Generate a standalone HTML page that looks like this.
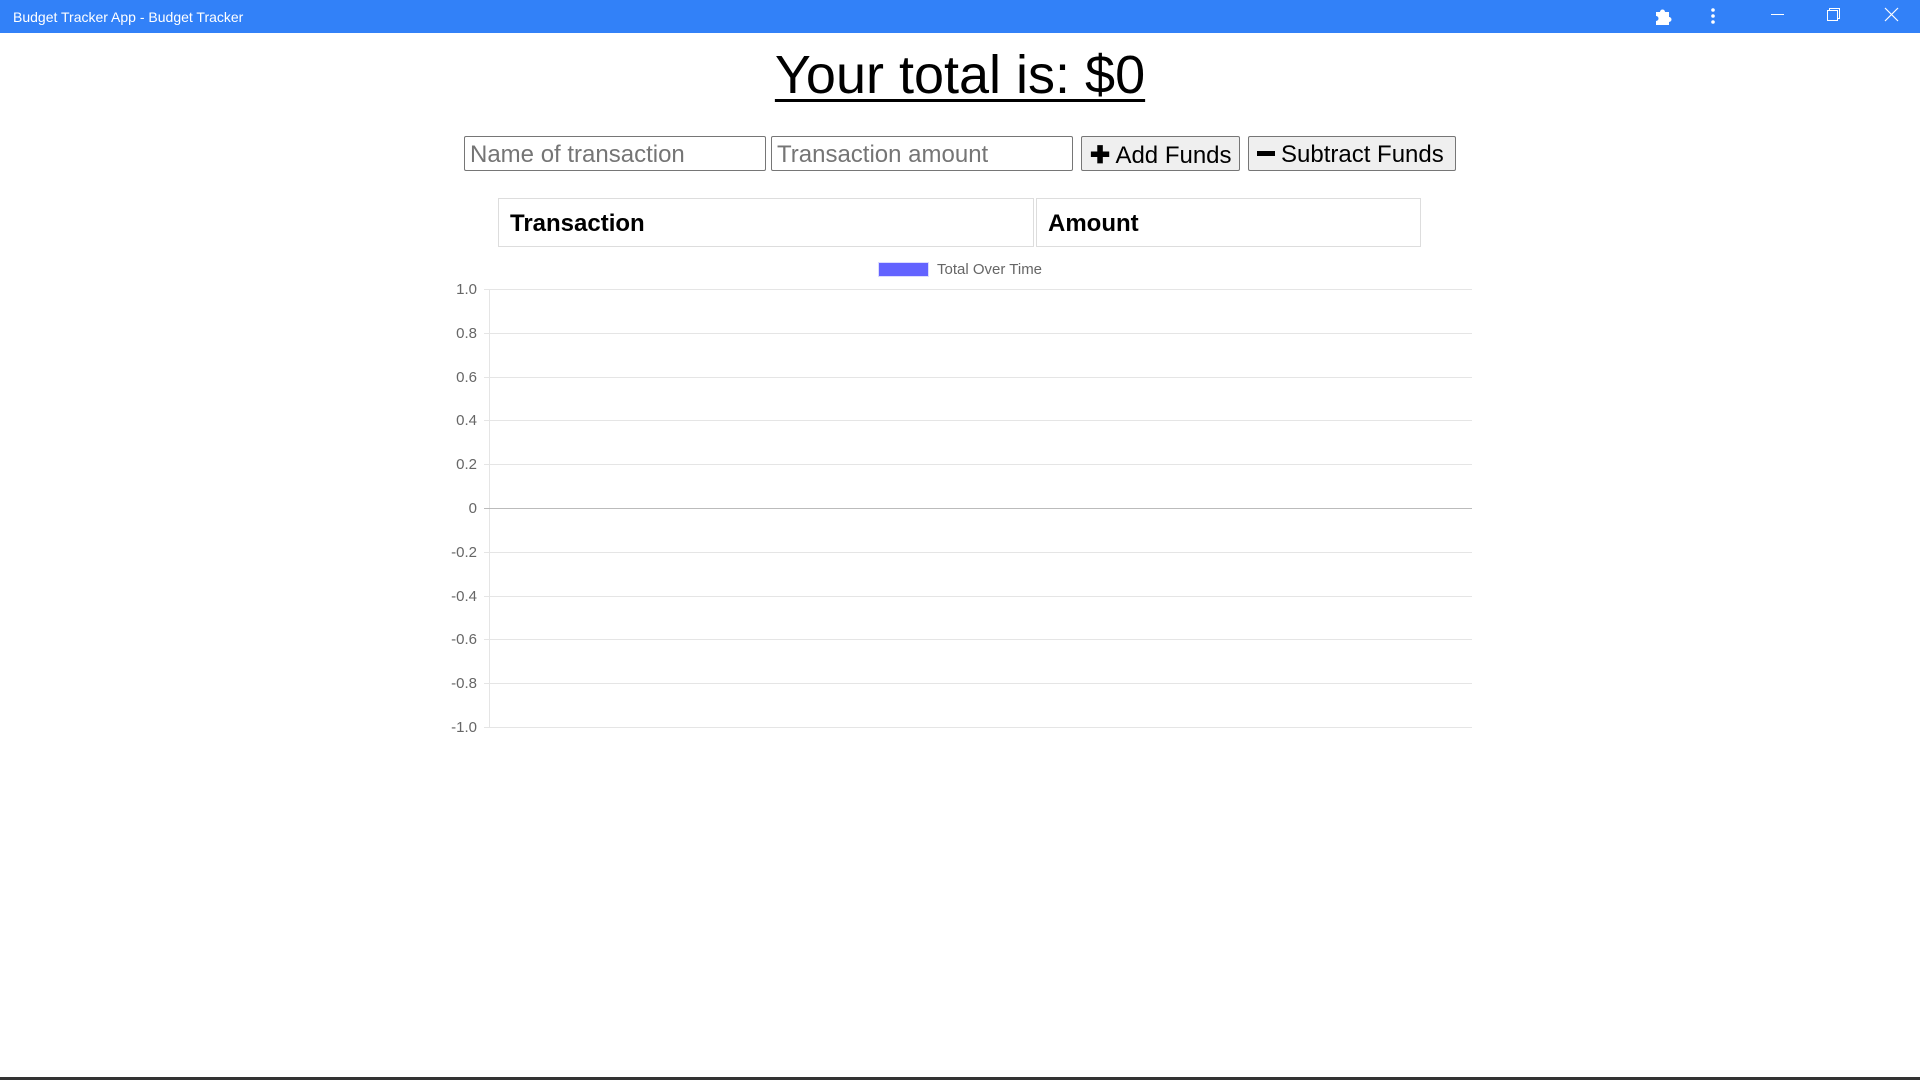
<!DOCTYPE html>
<html><head><meta charset="utf-8"><style>
*{margin:0;padding:0;box-sizing:border-box}
body{width:1920px;height:1080px;background:#fff;font-family:"Liberation Sans",Arial,sans-serif;position:relative;overflow:hidden}
.tb{position:absolute;left:0;top:0;width:1920px;height:33px;background:#3281f8;color:#fff;font-size:14px}
.tb .t{position:absolute;left:13px;top:9px}
h1{position:absolute;left:0;width:1920px;top:44px;text-align:center;font-weight:normal;font-size:54px;text-decoration:underline;text-decoration-thickness:3px;text-underline-offset:6px}
.in{position:absolute;top:136px;height:35px;border:1px solid #767676;border-radius:2px;font-size:24px;color:#757575;padding:4px 5px;background:#fff}
.bt{position:absolute;top:136px;height:35px;border:1px solid #767676;background:#efefef;font-size:24px;color:#000;padding:4px 8px;border-radius:2px;white-space:nowrap}
.c{position:absolute;top:198px;height:49px;border:1px solid #ddd;font-size:24px;font-weight:bold;padding:11px 11px}
.bot{position:absolute;left:0;top:1077px;width:1920px;height:3px;background:#333}
</style></head><body>
<div class="tb"><span class="t">Budget Tracker App - Budget Tracker</span>
<svg style="position:absolute;left:0;top:0" width="1920" height="33">
<path d="M1656 12h4a2.5 2.5 0 0 1 5 0h4v5a2.5 2.5 0 0 1 0 5v3h-13v-4a2.5 2.5 0 0 0 0-5z" fill="#fff"/>
<circle cx="1713" cy="10" r="1.8" fill="#fff"/><circle cx="1713" cy="16" r="1.8" fill="#fff"/><circle cx="1713" cy="22" r="1.8" fill="#fff"/>
<line x1="1771" y1="14.5" x2="1784" y2="14.5" stroke="#fff" stroke-width="1"/>
<rect x="1827.5" y="10.5" width="10" height="10" fill="none" stroke="#fff"/><path d="M1829.5 10.5v-2h10v10h-2" fill="none" stroke="#fff"/>
<path d="M1885 8l13 13M1898 8l-13 13" stroke="#fff" stroke-width="1.2"/>
</svg></div>
<h1>Your total is: $0</h1>
<div class="in" style="left:464px;width:302px">Name of transaction</div>
<div class="in" style="left:771px;width:302px">Transaction amount</div>
<div class="bt" style="left:1081px;width:159px"><b style="font-size:24px">&#x271A;</b> Add Funds</div>
<div class="bt" style="left:1248px;width:208px"><span style="display:inline-block;width:18px;height:5px;background:#000;vertical-align:middle;margin-right:6px;margin-top:-4px"></span>Subtract Funds</div>
<div class="c" style="left:498px;width:536px">Transaction</div>
<div class="c" style="left:1036px;width:385px">Amount</div>
<svg style="position:absolute;left:0;top:0" width="1920" height="1080" font-family="Liberation Sans, Arial, sans-serif" font-size="15" fill="#666">
<rect x="878.5" y="262.5" width="50" height="14" fill="#6363ff" stroke="#dcdcff"/>
<text x="937" y="274">Total Over Time</text>
<g stroke="#e5e5e5" stroke-width="1">
<line x1="484" y1="289.5" x2="1472" y2="289.5"/>
<line x1="484" y1="333.5" x2="1472" y2="333.5"/>
<line x1="484" y1="377.5" x2="1472" y2="377.5"/>
<line x1="484" y1="420.5" x2="1472" y2="420.5"/>
<line x1="484" y1="464.5" x2="1472" y2="464.5"/>
<line x1="484" y1="552.5" x2="1472" y2="552.5"/>
<line x1="484" y1="596.5" x2="1472" y2="596.5"/>
<line x1="484" y1="639.5" x2="1472" y2="639.5"/>
<line x1="484" y1="683.5" x2="1472" y2="683.5"/>
<line x1="484" y1="727.5" x2="1472" y2="727.5"/>
<line x1="489.5" y1="289" x2="489.5" y2="727"/>
</g>
<line x1="484" y1="508.5" x2="1472" y2="508.5" stroke="#bbb"/>
<g text-anchor="end">
<text x="477" y="294">1.0</text><text x="477" y="338">0.8</text><text x="477" y="382">0.6</text><text x="477" y="425">0.4</text><text x="477" y="469">0.2</text><text x="477" y="513">0</text><text x="477" y="557">-0.2</text><text x="477" y="601">-0.4</text><text x="477" y="644">-0.6</text><text x="477" y="688">-0.8</text><text x="477" y="732">-1.0</text>
</g></svg>
<div class="bot"></div>
</body></html>
